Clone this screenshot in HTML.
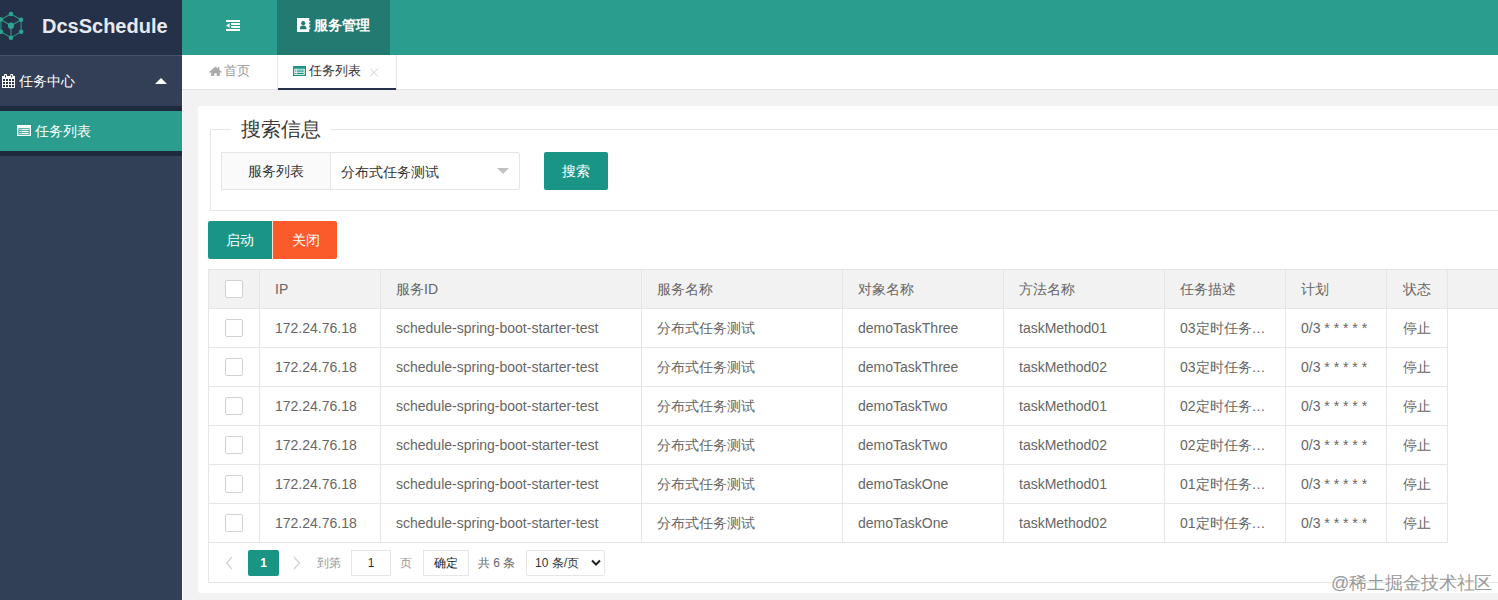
<!DOCTYPE html>
<html><head><meta charset="utf-8">
<style>
*{box-sizing:border-box;margin:0;padding:0}
html,body{width:1498px;height:600px;overflow:hidden}
body{background:#f2f2f2;font-family:"Liberation Sans",sans-serif;font-size:14px;color:#666;position:relative}
.abs{position:absolute}
/* sidebar */
#side{left:0;top:0;width:182px;height:600px;background:#313f57}
#logo{left:0;top:0;width:182px;height:55px;background:#243148}
#logo .t{left:42px;top:15px;font-size:20px;font-weight:bold;color:#e8eaf2;letter-spacing:0}
#m1{left:0;top:55px;width:182px;height:51px;background:#323f57;border-top:1px solid #46546b}
#strip1{left:0;top:106px;width:182px;height:5px;background:#1f2b3d}
#m2{left:0;top:111px;width:182px;height:40px;background:#2a9d8f;color:#fff}
#strip2{left:0;top:151px;width:182px;height:5px;background:#1f2b3d}
/* header */
#hdr{left:182px;top:0;width:1316px;height:55px;background:#2a9d8f}
#hact{left:277px;top:0;width:113px;height:55px;background:#237a70}
/* tabs */
#tabs{left:182px;top:55px;width:1316px;height:35px;background:#fff;border-bottom:1px solid #e2e2e2}
#tab2{left:277px;top:55px;width:120px;height:35px;background:#fff;border-left:1px solid #e6e6e6;border-right:1px solid #e6e6e6}
#tab2u{left:278px;top:88px;width:118px;height:2px;background:#25304a}
/* card */
#card{left:198px;top:106px;width:1320px;height:487px;background:#fff;border-radius:2px}
#fs{left:210px;top:129px;width:1300px;height:82px;border:1px solid #e6e6e6}
#legend{left:231px;top:116px;padding:0 10px;background:#fff;font-size:20px;font-weight:300;color:#3a3a3a;line-height:26px}
.lbl{left:221px;top:152px;width:110px;height:38px;background:#fafafa;border:1px solid #e6e6e6;color:#333;text-align:center;line-height:36px}
.sel{left:330px;top:152px;width:190px;height:38px;background:#fff;border:1px solid #e6e6e6;border-radius:0 2px 2px 0;color:#333;line-height:37px;padding-top:1px;padding-left:10px}
.arr{left:497px;top:168px;width:0;height:0;border-left:6px solid transparent;border-right:6px solid transparent;border-top:6px solid #c2c2c2}
.btn{height:38px;line-height:38px;color:#fff;text-align:center;font-size:14px}
#bs{left:544px;top:152px;width:64px;background:#1a9485;border-radius:2px}
#b1{left:208px;top:221px;width:64px;background:#1a9485;border-radius:2px 0 0 2px}
#b2{left:272px;top:221px;width:65px;background:#fb5a2a;border-radius:0 2px 2px 0;border-left:1px solid #fde0d2;padding-left:1px}
/* table */
#tbl{left:208px;top:269px;width:1310px;height:314px;border:1px solid #e6e6e6;background:#fff}
#thead{left:209px;top:270px;width:1300px;height:39px;background:#f2f2f2;border-bottom:1px solid #e6e6e6}
.vl{width:1px;background:#e6e6e6}
.hl{height:1px;background:#e6e6e6}
.cell{height:38px;line-height:38px;color:#666;white-space:nowrap}
.cb{width:18px;height:18px;border:1px solid #d2d2d2;background:#fff;border-radius:2px}
.sm{font-size:14px;line-height:22px;white-space:nowrap}
.tb{font-size:13px;line-height:18px;white-space:nowrap}
.pg{font-size:12px;line-height:26px;white-space:nowrap}
</style></head><body>
<div id="side" class="abs"></div>
<div id="logo" class="abs"><div class="t abs">DcsSchedule</div></div>
<div id="m1" class="abs"></div>
<div id="strip1" class="abs"></div>
<div id="m2" class="abs"></div>
<div id="strip2" class="abs"></div>

<div id="hdr" class="abs"></div>
<div id="hact" class="abs"></div>

<div id="tabs" class="abs"></div>
<div id="tab2" class="abs"></div>
<div id="tab2u" class="abs"></div>

<div id="card" class="abs"></div>
<div id="fs" class="abs"></div>
<div id="legend" class="abs">搜索信息</div>
<div class="lbl abs">服务列表</div>
<div class="sel abs">分布式任务测试</div>
<div class="arr abs"></div>
<div id="bs" class="btn abs">搜索</div>
<div id="b1" class="btn abs">启动</div>
<div id="b2" class="btn abs">关闭</div>

<div id="tbl" class="abs"></div>
<div id="thead" class="abs"></div>
<div class="abs vl" style="left:259px;top:270px;height:38px"></div>
<div class="abs vl" style="left:380px;top:270px;height:38px"></div>
<div class="abs vl" style="left:641px;top:270px;height:38px"></div>
<div class="abs vl" style="left:842px;top:270px;height:38px"></div>
<div class="abs vl" style="left:1003px;top:270px;height:38px"></div>
<div class="abs vl" style="left:1164px;top:270px;height:38px"></div>
<div class="abs vl" style="left:1285px;top:270px;height:38px"></div>
<div class="abs vl" style="left:1386px;top:270px;height:38px"></div>
<div class="abs vl" style="left:1447px;top:270px;height:38px"></div>
<div class="abs vl" style="left:259px;top:309px;height:234px"></div>
<div class="abs vl" style="left:380px;top:309px;height:234px"></div>
<div class="abs vl" style="left:641px;top:309px;height:234px"></div>
<div class="abs vl" style="left:842px;top:309px;height:234px"></div>
<div class="abs vl" style="left:1003px;top:309px;height:234px"></div>
<div class="abs vl" style="left:1164px;top:309px;height:234px"></div>
<div class="abs vl" style="left:1285px;top:309px;height:234px"></div>
<div class="abs vl" style="left:1386px;top:309px;height:234px"></div>
<div class="abs vl" style="left:1447px;top:309px;height:234px"></div>
<div class="abs hl" style="left:209px;top:347px;width:1238px"></div>
<div class="abs hl" style="left:209px;top:386px;width:1238px"></div>
<div class="abs hl" style="left:209px;top:425px;width:1238px"></div>
<div class="abs hl" style="left:209px;top:464px;width:1238px"></div>
<div class="abs hl" style="left:209px;top:503px;width:1238px"></div>
<div class="abs hl" style="left:209px;top:542px;width:1238px"></div>
<div class="abs cell" style="left:275px;top:270px">IP</div>
<div class="abs cell" style="left:396px;top:270px">服务ID</div>
<div class="abs cell" style="left:657px;top:270px">服务名称</div>
<div class="abs cell" style="left:858px;top:270px">对象名称</div>
<div class="abs cell" style="left:1019px;top:270px">方法名称</div>
<div class="abs cell" style="left:1180px;top:270px">任务描述</div>
<div class="abs cell" style="left:1301px;top:270px">计划</div>
<div class="abs cell" style="left:1387px;top:270px;width:60px;text-align:center">状态</div>
<div class="abs cb" style="left:225px;top:280px"></div>
<div class="abs cell" style="left:275px;top:309px">172.24.76.18</div>
<div class="abs cell" style="left:396px;top:309px">schedule-spring-boot-starter-test</div>
<div class="abs cell" style="left:657px;top:309px">分布式任务测试</div>
<div class="abs cell" style="left:858px;top:309px">demoTaskThree</div>
<div class="abs cell" style="left:1019px;top:309px">taskMethod01</div>
<div class="abs cell" style="left:1180px;top:309px">03定时任务…</div>
<div class="abs cell" style="left:1301px;top:309px">0/3 * * * * *</div>
<div class="abs cell" style="left:1387px;top:309px;width:60px;text-align:center">停止</div>
<div class="abs cb" style="left:225px;top:319px"></div>
<div class="abs cell" style="left:275px;top:348px">172.24.76.18</div>
<div class="abs cell" style="left:396px;top:348px">schedule-spring-boot-starter-test</div>
<div class="abs cell" style="left:657px;top:348px">分布式任务测试</div>
<div class="abs cell" style="left:858px;top:348px">demoTaskThree</div>
<div class="abs cell" style="left:1019px;top:348px">taskMethod02</div>
<div class="abs cell" style="left:1180px;top:348px">03定时任务…</div>
<div class="abs cell" style="left:1301px;top:348px">0/3 * * * * *</div>
<div class="abs cell" style="left:1387px;top:348px;width:60px;text-align:center">停止</div>
<div class="abs cb" style="left:225px;top:358px"></div>
<div class="abs cell" style="left:275px;top:387px">172.24.76.18</div>
<div class="abs cell" style="left:396px;top:387px">schedule-spring-boot-starter-test</div>
<div class="abs cell" style="left:657px;top:387px">分布式任务测试</div>
<div class="abs cell" style="left:858px;top:387px">demoTaskTwo</div>
<div class="abs cell" style="left:1019px;top:387px">taskMethod01</div>
<div class="abs cell" style="left:1180px;top:387px">02定时任务…</div>
<div class="abs cell" style="left:1301px;top:387px">0/3 * * * * *</div>
<div class="abs cell" style="left:1387px;top:387px;width:60px;text-align:center">停止</div>
<div class="abs cb" style="left:225px;top:397px"></div>
<div class="abs cell" style="left:275px;top:426px">172.24.76.18</div>
<div class="abs cell" style="left:396px;top:426px">schedule-spring-boot-starter-test</div>
<div class="abs cell" style="left:657px;top:426px">分布式任务测试</div>
<div class="abs cell" style="left:858px;top:426px">demoTaskTwo</div>
<div class="abs cell" style="left:1019px;top:426px">taskMethod02</div>
<div class="abs cell" style="left:1180px;top:426px">02定时任务…</div>
<div class="abs cell" style="left:1301px;top:426px">0/3 * * * * *</div>
<div class="abs cell" style="left:1387px;top:426px;width:60px;text-align:center">停止</div>
<div class="abs cb" style="left:225px;top:436px"></div>
<div class="abs cell" style="left:275px;top:465px">172.24.76.18</div>
<div class="abs cell" style="left:396px;top:465px">schedule-spring-boot-starter-test</div>
<div class="abs cell" style="left:657px;top:465px">分布式任务测试</div>
<div class="abs cell" style="left:858px;top:465px">demoTaskOne</div>
<div class="abs cell" style="left:1019px;top:465px">taskMethod01</div>
<div class="abs cell" style="left:1180px;top:465px">01定时任务…</div>
<div class="abs cell" style="left:1301px;top:465px">0/3 * * * * *</div>
<div class="abs cell" style="left:1387px;top:465px;width:60px;text-align:center">停止</div>
<div class="abs cb" style="left:225px;top:475px"></div>
<div class="abs cell" style="left:275px;top:504px">172.24.76.18</div>
<div class="abs cell" style="left:396px;top:504px">schedule-spring-boot-starter-test</div>
<div class="abs cell" style="left:657px;top:504px">分布式任务测试</div>
<div class="abs cell" style="left:858px;top:504px">demoTaskOne</div>
<div class="abs cell" style="left:1019px;top:504px">taskMethod02</div>
<div class="abs cell" style="left:1180px;top:504px">01定时任务…</div>
<div class="abs cell" style="left:1301px;top:504px">0/3 * * * * *</div>
<div class="abs cell" style="left:1387px;top:504px;width:60px;text-align:center">停止</div>
<div class="abs cb" style="left:225px;top:514px"></div>

<div id="wline" class="abs" style="left:182px;top:90px;width:1px;height:510px;background:#fff"></div>
<!-- logo icon -->
<svg class="abs" style="left:-2px;top:10px" width="28" height="32" viewBox="-2 10 28 32">
<g stroke="#2a9485" stroke-width="1.1" fill="none">
<path d="M11 14 L21 19.7 L21.2 31.7 L11 37.7 L0.9 31.7 L0.9 19.5 Z"/>
<path d="M11 25.7 L11 37.7 M11 25.7 L0.9 19.5 M11 25.7 L21 19.7"/>
</g>
<g fill="#2fa390">
<circle cx="11" cy="14" r="2.3"/><circle cx="21" cy="19.7" r="2.3"/><circle cx="21.2" cy="31.7" r="2.3"/>
<circle cx="11" cy="37.7" r="2.3"/><circle cx="0.9" cy="31.7" r="2.3"/><circle cx="0.9" cy="19.5" r="2.3"/>
<circle cx="11" cy="25.7" r="3.1"/>
</g></svg>
<!-- calendar -->
<svg class="abs" style="left:0;top:70px" width="20" height="22" viewBox="0 70 20 22">
<path fill="#fff" d="M2 76H15V88H2Z"/>
<rect fill="#fff" x="4" y="74" width="3" height="3" rx="1"/><rect fill="#fff" x="10.2" y="74" width="3" height="3" rx="1"/>
<g fill="#2a3248"><rect x="5" y="75" width="1" height="2.6" rx="0.5"/><rect x="11.2" y="75" width="1" height="2.6" rx="0.5"/>
<rect x="3.0" y="79" width="2" height="2"/><rect x="6.0" y="79" width="2" height="2"/><rect x="9.0" y="79" width="2" height="2"/><rect x="12.0" y="79" width="2" height="2"/><rect x="3.0" y="82" width="2" height="2"/><rect x="6.0" y="82" width="2" height="2"/><rect x="9.0" y="82" width="2" height="2"/><rect x="12.0" y="82" width="2" height="2"/><rect x="3.0" y="85" width="2" height="2"/><rect x="6.0" y="85" width="2" height="2"/><rect x="9.0" y="85" width="2" height="2"/><rect x="12.0" y="85" width="2" height="2"/></g></svg>
<div class="abs sm" style="left:19px;top:70px;color:#fff">任务中心</div>
<div class="abs" style="left:155px;top:78px;width:0;height:0;border-left:6px solid transparent;border-right:6px solid transparent;border-bottom:6px solid #fff"></div>
<!-- list icon sidebar -->
<svg class="abs" style="left:17px;top:125px" width="14" height="11" viewBox="0 0 14 11">
<path fill="#fff" fill-rule="evenodd" d="M0 0H14V11H0Z M1.4 3.2H12.6V9.7H1.4Z"/>
<rect fill="#fff" x="2.4" y="4.1" width="1.3" height="1.1"/><rect fill="#fff" x="4.3" y="4.1" width="7.4" height="1.1"/>
<rect fill="#fff" x="2.4" y="6" width="1.3" height="1.1"/><rect fill="#fff" x="4.3" y="6" width="7.4" height="1.1"/>
<rect fill="#fff" x="2.4" y="7.9" width="1.3" height="1.1"/><rect fill="#fff" x="4.3" y="7.9" width="7.4" height="1.1"/>
</svg>
<div class="abs sm" style="left:35px;top:120px;color:#fff">任务列表</div>

<!-- header outdent icon -->
<svg class="abs" style="left:226px;top:20px" width="14" height="11" viewBox="0 0 14 11">
<g fill="#fff"><rect x="0" y="0" width="14" height="2"/><rect x="5" y="3" width="9" height="2"/><rect x="5" y="6" width="9" height="2"/><rect x="0" y="9" width="14" height="2"/>
<path d="M0 5.5 L3.6 3.3 V7.7Z"/></g></svg>
<!-- address book -->
<svg class="abs" style="left:297px;top:18px" width="14" height="14" viewBox="0 0 14 14">
<path fill="#fff" d="M0 0H12.2V3H13.3V4.3H12.2V6.3H13.3V7.6H12.2V9.6H13.3V10.9H12.2V14H0Z"/>
<circle cx="6.2" cy="5.2" r="2.1" fill="#237a70"/>
<path fill="#237a70" d="M2.8 11.3 C2.8 8.4 4.2 7.6 6.2 7.6 C8.2 7.6 9.6 8.4 9.6 11.3Z"/>
</svg>
<div class="abs" style="left:314px;top:16px;color:#fff;font-weight:bold;font-size:14px;line-height:18px">服务管理</div>

<!-- tabs -->
<svg class="abs" style="left:209px;top:66px" width="13" height="10" viewBox="0 0 13 10">
<path fill="#aaa" d="M6.5 0.6 L0 6 L1 7 L2.2 6 V10 H5.3 V7.2 H7.7 V10 H10.8 V6 L12 7 L13 6 L10.3 3.8 V1 H8.8 V2.6Z"/></svg>
<div class="abs tb" style="left:224px;top:62px;color:#999">首页</div>
<svg class="abs" style="left:293px;top:66px" width="13" height="10" viewBox="0 0 13 10">
<path fill="#1f9585" fill-rule="evenodd" d="M0 0H13V10H0Z M1.3 2.8H11.7V8.7H1.3Z"/>
<g fill="#1f9585"><rect x="2.2" y="3.6" width="1.2" height="1"/><rect x="4" y="3.6" width="6.8" height="1"/>
<rect x="2.2" y="5.3" width="1.2" height="1"/><rect x="4" y="5.3" width="6.8" height="1"/>
<rect x="2.2" y="7" width="1.2" height="1"/><rect x="4" y="7" width="6.8" height="1"/></g></svg>
<div class="abs tb" style="left:309px;top:62px;color:#333">任务列表</div>
<svg class="abs" style="left:369px;top:68px" width="10" height="9" viewBox="0 0 10 9">
<path d="M1 0.5 L9 8.5 M9 0.5 L1 8.5" stroke="#cfcfcf" stroke-width="1"/></svg>

<!-- pagination -->
<svg class="abs" style="left:224px;top:556px" width="10" height="14" viewBox="0 0 10 14">
<path d="M8 1 L2.5 7 L8 13" stroke="#d2d2d2" stroke-width="1.2" fill="none"/></svg>
<div class="abs" style="left:248px;top:550px;width:31px;height:26px;background:#1a9485;border-radius:2px;color:#fff;font-size:12px;line-height:26px;text-align:center;font-weight:bold">1</div>
<svg class="abs" style="left:292px;top:556px" width="10" height="14" viewBox="0 0 10 14">
<path d="M2 1 L7.5 7 L2 13" stroke="#d2d2d2" stroke-width="1.2" fill="none"/></svg>
<div class="abs pg" style="left:317px;top:550px;color:#999">到第</div>
<div class="abs pg" style="left:351px;top:550px;width:40px;height:26px;border:1px solid #e6e6e6;color:#333;text-align:center;line-height:24px">1</div>
<div class="abs pg" style="left:400px;top:550px;color:#999">页</div>
<div class="abs pg" style="left:423px;top:550px;width:46px;height:26px;border:1px solid #e6e6e6;color:#333;text-align:center;line-height:24px;color:#222">确定</div>
<div class="abs pg" style="left:478px;top:550px;color:#666">共 6 条</div>
<div class="abs pg" style="left:526px;top:550px;width:79px;height:26px;border:1px solid #e6e6e6;color:#333;line-height:24px;padding-left:8px;border-radius:2px">10 条/页</div>
<svg class="abs" style="left:591px;top:559px" width="10" height="8" viewBox="0 0 10 8">
<path d="M1 1.5 L5 5.5 L9 1.5" stroke="#222" stroke-width="2" fill="none"/></svg>

<!-- watermark -->
<div class="abs" style="left:1331px;top:571px;font-size:18px;line-height:24px;color:#999;letter-spacing:-0.1px;white-space:nowrap;text-shadow:0 0 1px #fff">@稀土掘金技术社区</div>

</body></html>
